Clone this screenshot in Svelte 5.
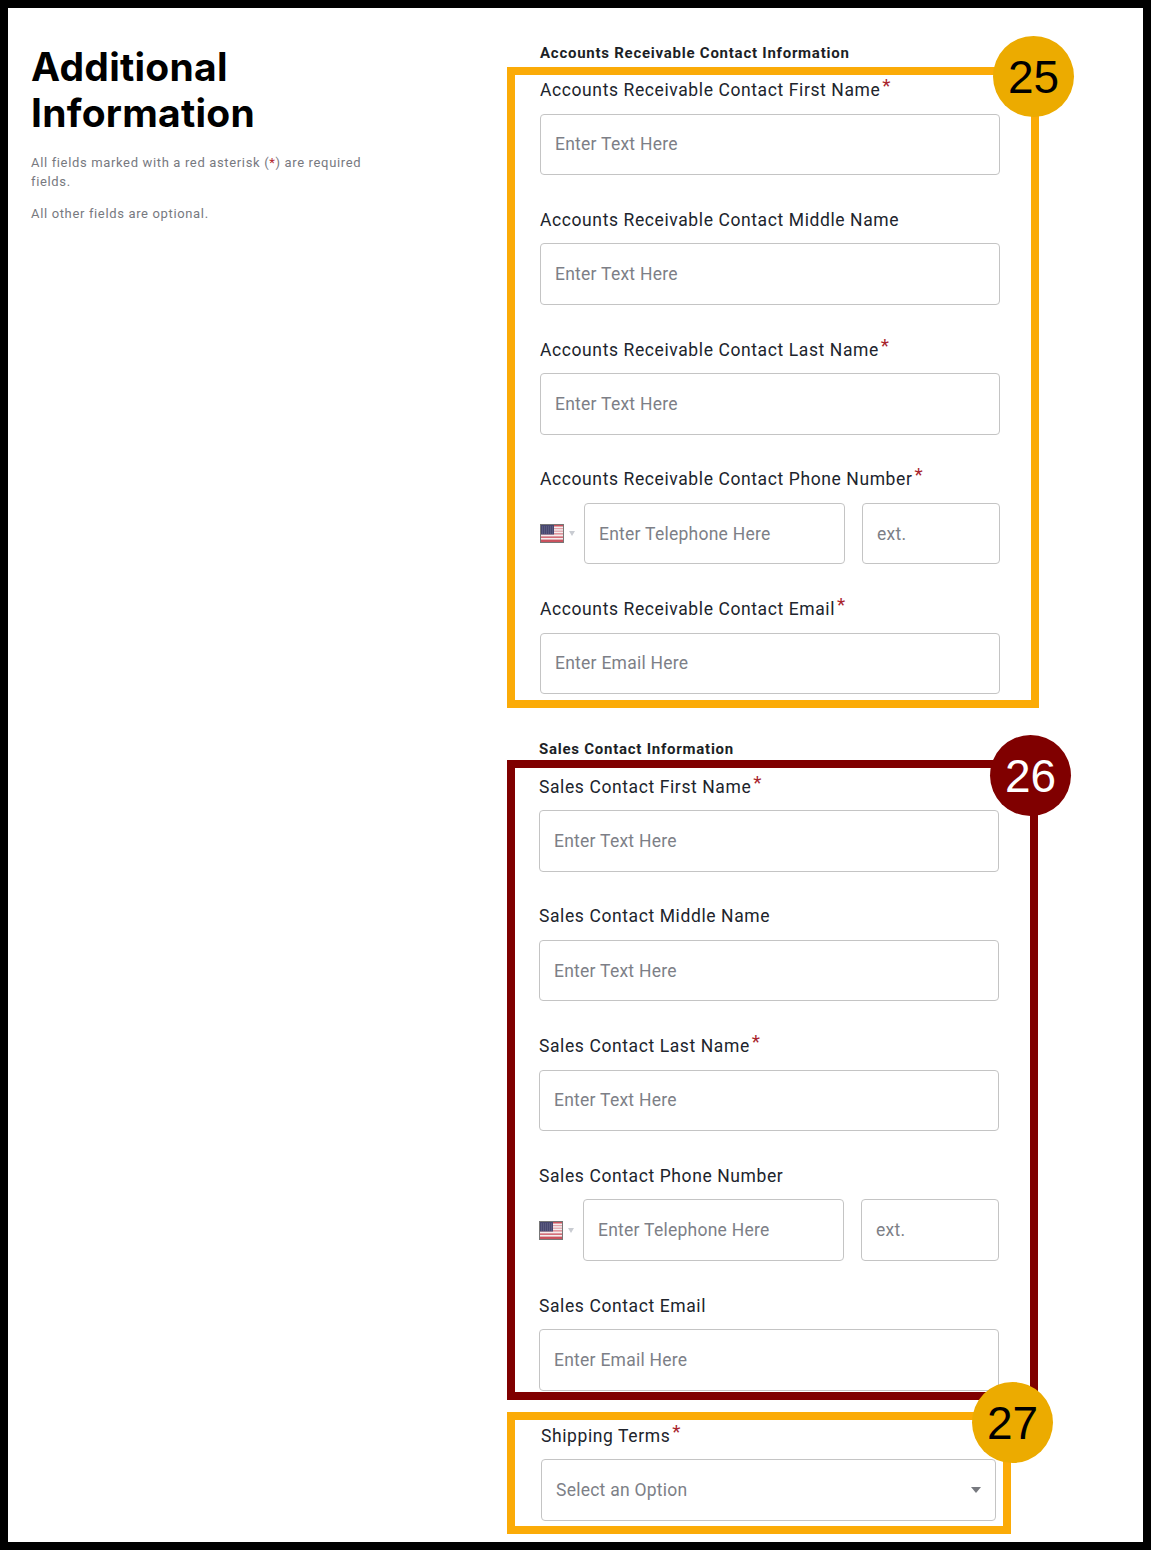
<script>
	const arFields = [
		{ label: 'Accounts Receivable Contact First Name', required: true, placeholder: 'Enter Text Here' },
		{ label: 'Accounts Receivable Contact Middle Name', placeholder: 'Enter Text Here' },
		{ label: 'Accounts Receivable Contact Last Name', required: true, placeholder: 'Enter Text Here' },
		{ label: 'Accounts Receivable Contact Phone Number', required: true, phone: true },
		{ label: 'Accounts Receivable Contact Email', required: true, placeholder: 'Enter Email Here' }
	];
	const salesFields = [
		{ label: 'Sales Contact First Name', required: true, placeholder: 'Enter Text Here' },
		{ label: 'Sales Contact Middle Name', placeholder: 'Enter Text Here' },
		{ label: 'Sales Contact Last Name', required: true, placeholder: 'Enter Text Here' },
		{ label: 'Sales Contact Phone Number', phone: true },
		{ label: 'Sales Contact Email', placeholder: 'Enter Email Here' }
	];
</script>

{#snippet flag()}
	<svg class="flag" width="24" height="19" viewBox="0 0 24 19" aria-hidden="true">
		<rect width="24" height="19" fill="#777" />
		<rect x="1" y="1" width="22" height="17" fill="#f4eeee" />
		<rect x="1" y="1" width="22" height="1.5" fill="#c9525e" />
		<rect x="1" y="4" width="22" height="1.2" fill="#e2a0a8" />
		<rect x="1" y="6.6" width="22" height="1.2" fill="#e2a0a8" />
		<rect x="1" y="9.2" width="22" height="1.3" fill="#d9808a" />
		<rect x="1" y="12.4" width="22" height="1.5" fill="#d0606c" />
		<rect x="1" y="15.6" width="22" height="2.4" fill="#c9525e" />
		<rect x="1" y="1" width="13" height="9.5" fill="#47476f" />
		<path d="M2 3h11M2 5h11M2 7h11M2 9h11" stroke="#8d8da8" stroke-width="0.6" stroke-dasharray="1 1" />
	</svg>
{/snippet}

{#snippet field(f)}
	<div class="field">
		<label>
			<span class="label-text">{f.label}{#if f.required}<sup>*</sup>{/if}</span>
			{#if f.phone}
				<div class="phone">
					<div class="country">
						{@render flag()}
						<span class="caret-small"></span>
					</div>
					<input class="tel" type="text" placeholder="Enter Telephone Here" />
					<input class="ext" type="text" placeholder="ext." />
				</div>
			{:else}
				<input type="text" placeholder={f.placeholder} />
			{/if}
		</label>
	</div>
{/snippet}

<div class="page">
	<aside class="intro">
		<h1>Additional Information</h1>
		<p>All fields marked with a red asterisk (<span class="red">*</span>) are required fields.</p>
		<p>All other fields are optional.</p>
	</aside>

	<main class="forms">
		<h2 class="ar-title">Accounts Receivable Contact Information</h2>
		<section class="box box-ar">
			{#each arFields as f}
				{@render field(f)}
			{/each}
			<span class="badge badge-25">25</span>
		</section>

		<h2 class="sales-title">Sales Contact Information</h2>
		<section class="box box-sales">
			{#each salesFields as f}
				{@render field(f)}
			{/each}
			<span class="badge badge-26">26</span>
		</section>

		<section class="box box-shipping">
			<div class="field">
				<label>
					<span class="label-text">Shipping Terms<sup>*</sup></span>
					<div class="select-wrap">
						<select>
							<option>Select an Option</option>
						</select>
						<span class="caret"></span>
					</div>
				</label>
			</div>
			<span class="badge badge-27">27</span>
		</section>
	</main>
</div>

<style>
	:global(body) {
		background: #fff;
	}

	.page {
		box-sizing: border-box;
		width: 1151px;
		height: 1550px;
		border: 8px solid #000;
		background: #fff;
		display: flex;
		font-family: Roboto, "Liberation Sans", sans-serif;
		overflow: hidden;
	}

	.intro {
		width: 499px;
		flex: none;
		box-sizing: border-box;
		padding: 36px 0 0 23px;
	}

	h1 {
		margin: 0 0 17px;
		width: 300px;
		font-family: Inter, sans-serif;
		font-size: 39px;
		line-height: 46px;
		font-weight: 700;
		letter-spacing: 0.25px;
		color: #000;
	}

	.intro p {
		margin: 0 0 13px;
		width: 345px;
		font-size: 13px;
		line-height: 19px;
		letter-spacing: 0.65px;
		color: #77797f;
	}

	.red {
		color: #b3262e;
	}

	.forms {
		flex: 1;
		display: flex;
		flex-direction: column;
		align-items: flex-start;
	}

	h2 {
		margin: 0;
		font-size: 15px;
		line-height: 18px;
		font-weight: 700;
		letter-spacing: 0.75px;
		color: #1c1f26;
		white-space: nowrap;
	}

	.ar-title {
		padding: 36px 0 5px 33px;
	}

	.sales-title {
		padding: 32px 0 2px 32px;
	}

	.box {
		position: relative;
		box-sizing: border-box;
		border: 8px solid #fbab07;
		display: flex;
		flex-direction: column;
	}

	.box-ar {
		width: 532px;
		height: 641px;
		padding: 2px 0 0 25px;
	}

	.box-sales {
		width: 531px;
		height: 640px;
		border-color: #800000;
		padding: 5.5px 0 0 24px;
		margin-bottom: 12px;
	}

	.box-shipping {
		width: 504px;
		height: 122px;
		padding: 2.5px 0 0 26px;
	}

	.field {
		width: 460px;
		height: 129.75px;
		flex: none;
	}

	.box-shipping .field {
		width: 455px;
	}

	label {
		display: block;
	}

	.label-text {
		display: block;
		height: 28px;
		margin-bottom: 8.5px;
		font-size: 17.5px;
		line-height: 26px;
		letter-spacing: 0.6px;
		color: #20242c;
		white-space: nowrap;
	}

	sup {
		display: inline-block;
		vertical-align: baseline;
		font-size: 19px;
		line-height: 0;
		margin-left: 2px;
		color: #a8242c;
		position: relative;
		top: -4px;
	}

	input,
	select {
		display: block;
		box-sizing: border-box;
		width: 100%;
		height: 61.5px;
		padding: 0 14px;
		border: 1px solid #c4c4c4;
		border-radius: 4px;
		background: #fff;
		font-family: Roboto, "Liberation Sans", sans-serif;
		font-size: 17.5px;
		letter-spacing: 0.25px;
		color: #7d7f87;
		outline: none;
	}

	input::placeholder {
		color: #7d7f87;
		opacity: 1;
	}

	.phone {
		display: flex;
		align-items: center;
	}

	.country {
		width: 44px;
		flex: none;
		display: flex;
		align-items: center;
		gap: 5px;
	}

	.flag {
		display: block;
	}

	.caret-small {
		width: 0;
		height: 0;
		border-left: 3.5px solid transparent;
		border-right: 3.5px solid transparent;
		border-top: 5px solid #c9ccd2;
	}

	.tel {
		width: 261px;
		flex: none;
	}

	.ext {
		width: 138px;
		flex: none;
		margin-left: 17px;
	}

	.select-wrap {
		position: relative;
	}

	select {
		appearance: none;
	}

	.caret {
		position: absolute;
		right: 15.5px;
		top: 28px;
		width: 0;
		height: 0;
		border-left: 5.5px solid transparent;
		border-right: 5.5px solid transparent;
		border-top: 6px solid #77797f;
	}

	.badge {
		position: absolute;
		width: 81px;
		height: 81px;
		border-radius: 50%;
		display: flex;
		align-items: center;
		justify-content: center;
		background: #ecab00;
		color: #000;
		font-family: "Liberation Sans", Arial, sans-serif;
		font-size: 46px;
	}

	.badge-25 {
		top: -39px;
		right: -43px;
	}

	.badge-26 {
		top: -33px;
		right: -41px;
		background: #800000;
		color: #fff;
	}

	.badge-27 {
		top: -38px;
		right: -50px;
	}
</style>
